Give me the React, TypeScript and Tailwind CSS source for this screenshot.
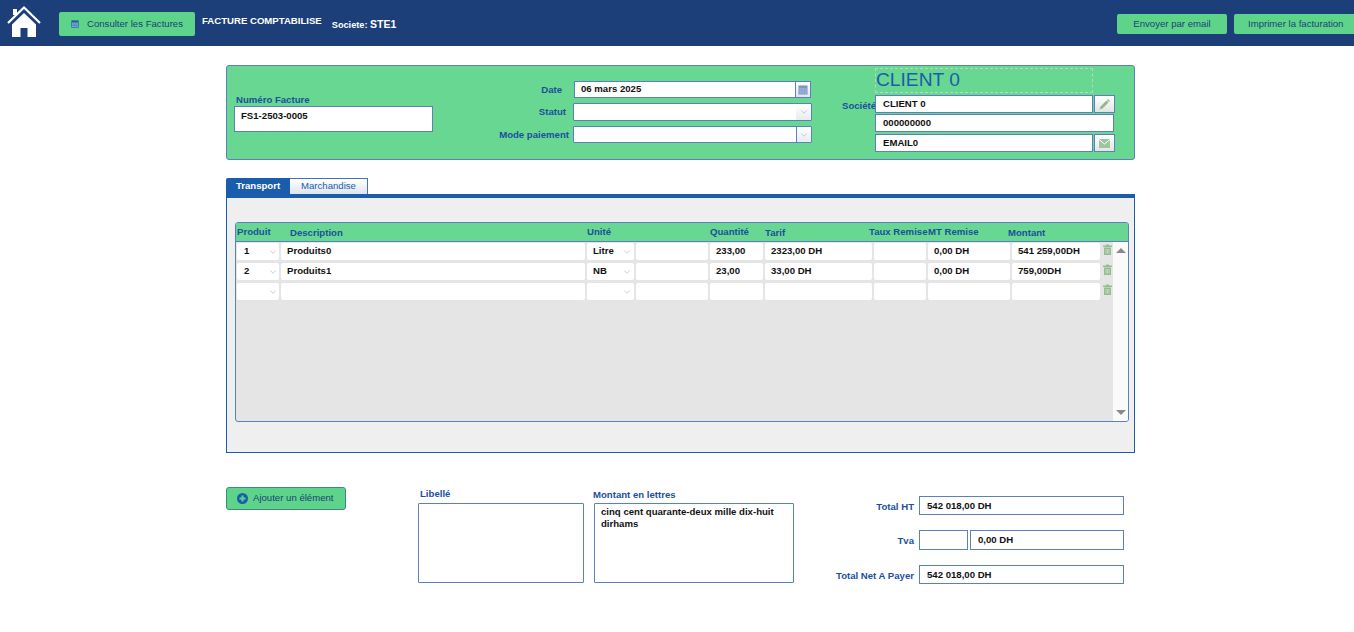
import { ChevronDown } from "lucide-react";

const label = "font-bold text-[9.6px] leading-[12px] text-[#1b4f9f] whitespace-nowrap";
const field = "border border-[#5a80bd] bg-white font-bold text-[9.6px] text-[#111] px-[7px] flex items-center";
const iconBtn = "w-[21px] h-[18px] border border-[#5a80bd] bg-gradient-to-b from-white to-[#e4e4e4] flex items-center justify-center";
const rowGrid = "grid grid-cols-[42px_304px_47px_72px_53px_107px_52px_82px_88px] gap-[2px]";
const cell = "h-[17px] rounded-[2px] bg-white flex items-center font-bold text-[9.6px] text-[#111] whitespace-nowrap";

const rows = [
  { id: "1", desc: "Produits0", unit: "Litre", qty: "233,00", tarif: "2323,00 DH", remise: "0,00 DH", montant: "541 259,00DH" },
  { id: "2", desc: "Produits1", unit: "NB", qty: "23,00", tarif: "33,00 DH", remise: "0,00 DH", montant: "759,00DH" },
  { id: "", desc: "", unit: "", qty: "", tarif: "", remise: "", montant: "" },
];

function HomeIcon() {
  return (
    <svg width="34" height="34" viewBox="0 0 34 34">
      <path d="M1 18 L17 2.500 L33 18" fill="none" stroke="#fff" strokeWidth="2.2" />
      <rect x="6" y="4" width="4" height="6" fill="#fff" />
      <path d="M5 19.500 L17 8 L29 19.500 V32 H20.500 V23 H13.500 V32 H5 Z" fill="#fff" />
    </svg>
  );
}

function CalendarIcon({ size = 11, color = "#1b4f9f" }: { size?: number; color?: string }) {
  return (
    <svg width={size} height={size} viewBox="0 0 11 11">
      <rect x="0.5" y="0.5" width="10" height="10" fill={color} />
      <rect x="1.5" y="3.5" width="8" height="6" fill="#9db8dc" />
      <path d="M1.5 5.5h8M1.5 7.5h8M4 3.5v6M7 3.5v6" stroke={color} strokeWidth="0.6" />
    </svg>
  );
}

function TrashIcon() {
  return (
    <svg width="9" height="11" viewBox="0 0 9 11" className="block">
      <path d="M3 0.5h3v1h3v1.5H0V1.500h3z M1 3.500h7V11H1z" fill="#93bf8f" />
      <path d="M3 5v4.500M4.500 5v4.500M6 5v4.500" stroke="#e5e5e5" strokeWidth="0.6" />
    </svg>
  );
}

function Chevron({ className = "" }: { className?: string }) {
  return <ChevronDown size={10} strokeWidth={1.5} className={`text-[#a5b1c2] ${className}`} />;
}

function Total({ name, children }: { name: string; children: React.ReactNode }) {
  return (
    <div className="flex items-center justify-end gap-[5px]">
      <span className={`${label} mt-[2px]`}>{name}</span>
      {children}
    </div>
  );
}

export default function App() {
  return (
    <div className="h-[632px] w-[1354px] overflow-hidden bg-white font-['Liberation_Sans',Arial,sans-serif]">
      <header className="h-[46px] bg-[#1c3f79] flex items-center">
        <div className="ml-[7px] mt-[-2px] w-[34px]">
          <HomeIcon />
        </div>
        <button className="ml-[18px] mt-[2px] w-[136px] h-[24px] rounded-[2px] bg-[#5dd48a] flex items-center pl-[12px] gap-[8px] text-[9.6px] text-[#1c3f79]">
          <CalendarIcon size={8} color="#1a5dad" />
          Consulter les Factures
        </button>
        <span className="ml-[7px] mt-[-3px] text-[9.6px] font-bold text-white whitespace-nowrap">FACTURE COMPTABILISE</span>
        <span className="ml-[10px] mt-[3px] text-[9.2px] font-bold text-white whitespace-nowrap">
          Societe: <span className="text-[10.5px]">STE1</span>
        </span>
        <div className="ml-auto flex gap-[7px] mt-[2px]">
          <button className="w-[110px] h-[20px] rounded-[2px] bg-[#5dd48a] text-[9.6px] text-[#1c3f79]">Envoyer par email</button>
          <button className="w-[120px] h-[20px] rounded-l-[2px] bg-[#5dd48a] text-[9.6px] text-[#1c3f79] text-left pl-[14px]">Imprimer la facturation</button>
        </div>
      </header>

      <main className="ml-[226px] w-[909px]">
        <section className="mt-[19px] h-[95px] rounded-[3px] border border-[#5a80bd] bg-[#68d791] flex items-start">
          <div className="ml-[7px] mt-[28px] w-[199px]">
            <div className={`${label} ml-[2px]`}>Numéro Facture</div>
            <div className={`${field} h-[26px] items-start pt-[2px] pl-[6px]`}>FS1-2503-0005</div>
          </div>

          <div className="ml-[62px] mt-[15px] w-[317px] flex flex-col">
            <div className="flex items-center justify-end pr-px">
              <span className={`${label} mr-[12px] mt-px`}>Date</span>
              <div className={`${field} w-[222px] h-[17px] pl-[6px]`}>06 mars 2025</div>
              <div className="w-[15px] h-[17px] border border-l-0 border-[#5a80bd] bg-gradient-to-b from-white to-[#dfe5ee] flex items-center justify-center">
                <CalendarIcon size={10} color="#7f97bf" />
              </div>
            </div>
            <div className="mt-[5px] flex items-center justify-end">
              <span className={`${label} mr-[7px]`}>Statut</span>
              <div className="w-[239px] h-[18px] border border-[#5a80bd] rounded-[1px] bg-white flex items-center justify-end">
                <div className="w-[15px] h-full bg-gradient-to-b from-white to-[#e8ebf0] flex items-center justify-center"><Chevron /></div>
              </div>
            </div>
            <div className="mt-[5px] flex items-center justify-end">
              <span className={`${label} mr-[4px]`}>Mode paiement</span>
              <div className="w-[239px] h-[17px] border border-[#5a80bd] rounded-[1px] bg-white flex items-center justify-end">
                <div className="w-[15px] h-full border-l border-[#5a80bd] bg-gradient-to-b from-white to-[#e8ebf0] flex items-center justify-center"><Chevron /></div>
              </div>
            </div>
          </div>

          <div className="ml-[30px] flex items-start">
            <span className={`${label} w-[33px] mt-[34px]`}>Société</span>
            <div className="mt-[2px] flex flex-col">
              <div className="w-[218px] h-[25px] border border-dashed border-[#b5d8c0] rounded-[1px] text-[19.2px] leading-[21px] text-[#1b5cb0] whitespace-nowrap">CLIENT 0</div>
              <div className="mt-[2px] flex gap-px">
                <div className={`${field} w-[218px] h-[18px] pt-px`}>CLIENT 0</div>
                <div className={iconBtn}>
                  <svg width="11" height="11" viewBox="0 0 11 11">
                    <path d="M0.500 10.500 L1.500 7.500 L7.500 1.500 L9.500 3.500 L3.500 9.500 Z M8 1 L9 0 L11 2 L10 3 Z" fill="#8dbb8a" />
                  </svg>
                </div>
              </div>
              <div className={`${field} mt-[1px] w-[239px] h-[18px] pt-px`}>000000000</div>
              <div className="mt-[2px] flex gap-px">
                <div className={`${field} w-[218px] h-[18px] pt-px`}>EMAIL0</div>
                <div className={iconBtn}>
                  <svg width="11" height="9" viewBox="0 0 11 9">
                    <rect width="11" height="9" fill="#9cc79a" />
                    <path d="M0 0.500 L5.500 5 L11 0.500" fill="none" stroke="#fff" strokeWidth="1" />
                  </svg>
                </div>
              </div>
            </div>
          </div>
        </section>

        <nav className="mt-[18px] h-[16px] flex">
          <button className="w-[64px] rounded-tl-[2px] bg-[#1a5dad] text-[9.6px] font-bold text-white">Transport</button>
          <button className="w-[78px] border border-b-0 border-l-0 border-[#3f76bb] bg-gradient-to-b from-white to-[#dfe5ec] text-[9.6px] text-[#1a5dad]">Marchandise</button>
        </nav>

        <section className="h-[259px] border border-t-4 border-[#1a5dad] bg-[#efefef] pt-[24px] pl-[8px] pr-[5px]">
          <div className="h-[200px] rounded-[3px] border border-[#5a80bd] bg-[#e5e5e5] flex flex-col overflow-hidden">
            <div className="h-[19px] shrink-0 border-b border-[#5a80bd] bg-[#68d791] flex items-center pl-px">
              <span className={`${label} w-[53px]`}>Produit</span>
              <span className={`${label} w-[297px] mt-px`}>Description</span>
              <span className={`${label} w-[123px]`}>Unité</span>
              <span className={`${label} w-[55px]`}>Quantité</span>
              <span className={`${label} w-[104px] mt-px`}>Tarif</span>
              <span className={`${label} w-[59px]`}>Taux Remise</span>
              <span className={`${label} w-[80px]`}>MT Remise</span>
              <span className={`${label} mt-px`}>Montant</span>
            </div>
            <div className="flex-1 flex">
              <div className="flex-1 pl-px pt-px flex flex-col gap-[3px]">
                {rows.map((r, i) => (
                  <div key={i} className="flex">
                    <div className={rowGrid}>
                      <div className={`${cell} pl-[7px] pr-[1px]`}>{r.id}<Chevron className="ml-auto" /></div>
                      <div className={`${cell} px-[6px]`}>{r.desc}</div>
                      <div className={`${cell} pl-[6px] pr-[2px]`}>{r.unit}<Chevron className="ml-auto" /></div>
                      <div className={cell} />
                      {[r.qty, r.tarif, "", r.remise, r.montant].map((v, j) => (
                        <div key={j} className={`${cell} px-[6px]`}>{v}</div>
                      ))}
                    </div>
                    <div className="ml-[2px] pl-[1px] w-[11px] pt-[1px]"><TrashIcon /></div>
                  </div>
                ))}
              </div>
              <div className="w-[15px] bg-[#fafafa] flex flex-col items-center justify-between pt-[6px] pb-[6px]">
                <div className="w-0 h-0 border-x-[5px] border-x-transparent border-b-[5px] border-b-[#8a8a8a]" />
                <div className="w-0 h-0 border-x-[5px] border-x-transparent border-t-[5px] border-t-[#8a8a8a]" />
              </div>
            </div>
          </div>
        </section>

        <section className="mt-[34px] flex items-start">
          <button className="w-[120px] h-[23px] rounded-[3px] border border-[#3f8a7a] bg-[#5dd48a] flex items-center pl-[10px] gap-[5px] text-[9.6px] text-[#1c3f79]">
            <svg width="11" height="11" viewBox="0 0 11 11">
              <circle cx="5.500" cy="5.500" r="5.500" fill="#1a5dad" />
              <path d="M5.500 2.500v6M2.500 5.500h6" stroke="#5dd48a" strokeWidth="2" />
            </svg>
            Ajouter un élément
          </button>

          <div className="ml-[72px] w-[166px] pt-[1px]">
            <div className={`${label} ml-[2px] mb-[3px]`}>Libellé</div>
            <div className="h-[80px] border border-[#5a80bd] rounded-[1px] bg-white" />
          </div>

          <div className="ml-[10px] w-[200px] pt-[2px]">
            <div className={`${label} mb-[3px] ml-[-1px] h-[11px]`}>Montant en lettres</div>
            <div className="h-[80px] border border-[#5a80bd] rounded-[1px] bg-white px-[6px] py-[2px] font-bold text-[9.6px] leading-[12px] text-[#111]">
              cinq cent quarante-deux mille dix-huit dirhams
            </div>
          </div>

          <div className="w-[330px] pt-[9px] flex flex-col gap-[15px]">
            <Total name="Total HT">
              <div className={`${field} w-[205px] h-[19px] pt-px`}>542 018,00 DH</div>
            </Total>
            <Total name="Tva">
              <div className="flex gap-[2px]">
                <div className={`${field} w-[49px] h-[20px]`} />
                <div className={`${field} w-[154px] h-[20px] pt-px`}>0,00 DH</div>
              </div>
            </Total>
            <Total name="Total Net A Payer">
              <div className={`${field} w-[205px] h-[19px] pt-px`}>542 018,00 DH</div>
            </Total>
          </div>
        </section>
      </main>
    </div>
  );
}
